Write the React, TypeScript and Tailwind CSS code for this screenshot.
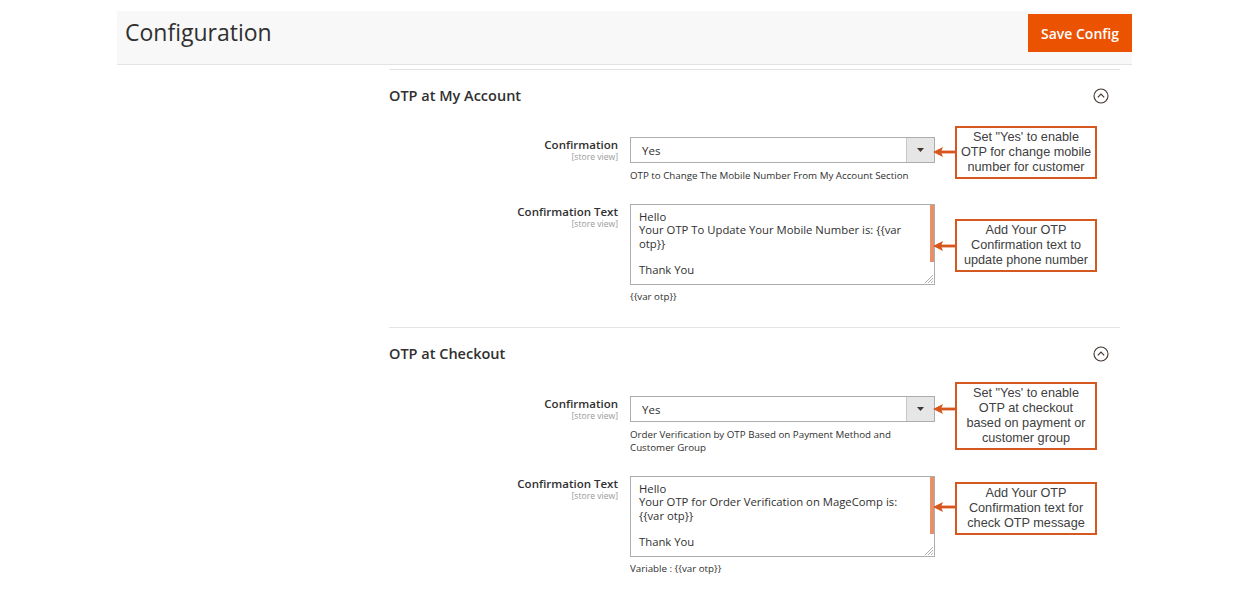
import React from "react";

const OPEN = "font-['Open_Sans',sans-serif]";

function Arrow() {
  return (
    <svg width="23" height="12" viewBox="0 0 23 12" className="block">
      <rect x="8" y="4.6" width="15" height="2.8" fill="#d6561c" />
      <path d="M0 6 L10 1 L8 6 L10 11 Z" fill="#d6561c" />
    </svg>
  );
}

function Callout({ lines, top, arrowTop }: { lines: string[]; top: number; arrowTop: number }) {
  return (
    <>
      <div className="absolute left-[544px]" style={{ top: arrowTop - 6 }}>
        <Arrow />
      </div>
      <div
        className="absolute left-[566px] w-[142px] border-2 border-[#d5581e] bg-white flex flex-col items-center justify-center py-[2px] font-['Liberation_Sans',Arial,sans-serif] text-[12.7px] leading-[15px] text-[#404040] text-center"
        style={{ top }}
      >
        {lines.map((l, i) => (
          <div key={i} className="whitespace-nowrap">{l}</div>
        ))}
      </div>
    </>
  );
}

function Label({ text }: { text: string }) {
  return (
    <div className="w-[229px] shrink-0 text-right">
      <div className="text-[11.5px] leading-[14px] font-semibold text-[#303030] pt-[1px]">{text}</div>
      <div className="text-[8.6px] leading-[10px] text-[#9a9a9a]">[store view]</div>
    </div>
  );
}

function Select() {
  return (
    <div className="h-[26px] w-[305px] border border-[#adadad] bg-white flex items-stretch">
      <div className="flex-1 flex items-center pl-[11px] pt-[2px] text-[11.5px] text-[#303030]">Yes</div>
      <div className="w-[28px] bg-[#e6e6e6] border-l border-[#c8c8c8] flex items-center justify-center">
        <svg width="7" height="4" viewBox="0 0 7 4">
          <path d="M0 0 H7 L3.5 4 Z" fill="#41362f" />
        </svg>
      </div>
    </div>
  );
}

function TextArea({ lines }: { lines: string[] }) {
  return (
    <div className="relative h-[81px] w-[305px] border border-[#adadad] bg-white pl-[8px] pt-[5px] text-[11.3px] leading-[13.3px] text-[#303030]">
      {lines.map((l, i) => (
        <div key={i} className="whitespace-nowrap h-[13.3px]">{l}</div>
      ))}
      <div className="absolute right-0 top-0 w-[4px] h-[57px] bg-[#e8906a]" />
      <svg className="absolute right-[1px] bottom-[1px]" width="9" height="9" viewBox="0 0 9 9">
        <path d="M1 9 L9 1 M4 9 L9 4 M7 9 L9 7" stroke="#9a9a9a" strokeWidth="0.8" />
      </svg>
    </div>
  );
}

function ChevronCircle() {
  return (
    <svg width="16" height="16" viewBox="0 0 16 16">
      <circle cx="8" cy="8" r="7" fill="none" stroke="#41362f" strokeWidth="1.1" />
      <path d="M4.8 9.3 L8 6.1 L11.2 9.3" fill="none" stroke="#41362f" strokeWidth="1.2" />
    </svg>
  );
}

function Note({ children }: { children: React.ReactNode }) {
  return <div className="text-[9.75px] leading-[13px] text-[#303030] whitespace-nowrap">{children}</div>;
}

export default function App() {
  return (
    <div className={`w-[1250px] h-[600px] bg-white overflow-hidden ${OPEN}`}>
      <div className="ml-[117px] mt-[11px] w-[1015px] h-[54px] bg-[#f8f8f8] border-b border-[#e3e3e3] flex items-start justify-between">
        <div className="pl-[8px] pt-[6px] text-[23px] leading-[30px] text-[#303030]">Configuration</div>
        <div className="mt-[3px] h-[38px] w-[104px] bg-[#eb5202] text-white text-[14px] font-semibold flex items-center justify-center">
          Save Config
        </div>
      </div>

      <div className="ml-[389px] w-[731px] mt-[4px]">
        <div className="border-t border-[#e3e3e3] pb-[24px]">
          <div className="h-[51px] flex items-center justify-between pr-[11px]">
            <div className="text-[14.5px] font-semibold text-[#303030]">OTP at My Account</div>
            <ChevronCircle />
          </div>
          <div className="relative mt-[16px] flex gap-[12px]">
            <Label text="Confirmation" />
            <div className="flex flex-col gap-[6px]">
              <Select />
              <Note>OTP to Change The Mobile Number From My Account Section</Note>
            </div>
            <Callout top={-11} arrowTop={15} lines={["Set \"Yes' to enable", "OTP for change mobile", "number for customer"]} />
          </div>
          <div className="relative mt-[22px] flex gap-[12px]">
            <Label text="Confirmation Text" />
            <div className="flex flex-col gap-[5px]">
              <TextArea lines={["Hello", "Your OTP To Update Your Mobile Number is: {{var", "otp}}", "", "Thank You"]} />
              <Note>{"{{var otp}}"}</Note>
            </div>
            <Callout top={15} arrowTop={42} lines={["Add Your OTP", "Confirmation text to", "update phone number"]} />
          </div>
        </div>

        <div className="border-t border-[#e3e3e3]">
          <div className="h-[51px] flex items-center justify-between pr-[11px]">
            <div className="text-[14.5px] font-semibold text-[#303030]">OTP at Checkout</div>
            <ChevronCircle />
          </div>
          <div className="relative mt-[17px] flex gap-[12px]">
            <Label text="Confirmation" />
            <div className="flex flex-col gap-[6px]">
              <Select />
              <Note>
                Order Verification by OTP Based on Payment Method and
                <br />
                Customer Group
              </Note>
            </div>
            <Callout top={-14} arrowTop={13} lines={["Set \"Yes' to enable", "OTP at checkout", "based on payment or", "customer group"]} />
          </div>
          <div className="relative mt-[22px] flex gap-[12px]">
            <Label text="Confirmation Text" />
            <div className="flex flex-col gap-[5px]">
              <TextArea lines={["Hello", "Your OTP for Order Verification on MageComp is:", "{{var otp}}", "", "Thank You"]} />
              <Note>{"Variable : {{var otp}}"}</Note>
            </div>
            <Callout top={6} arrowTop={31} lines={["Add Your OTP", "Confirmation text for", "check OTP message"]} />
          </div>
        </div>
      </div>
    </div>
  );
}
